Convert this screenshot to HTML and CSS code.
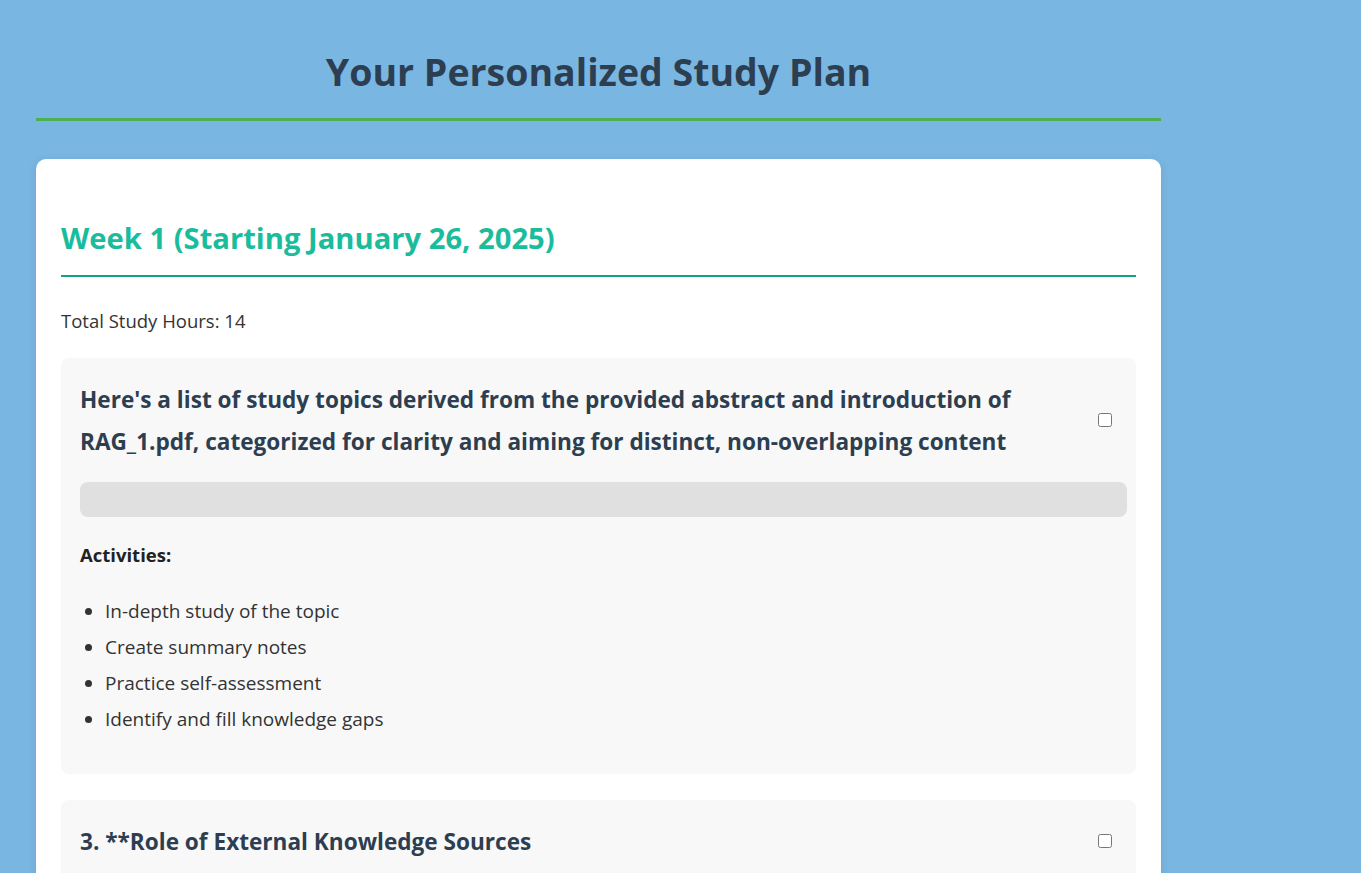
FILE: index.html
```html
<!DOCTYPE html>
<html lang="en">
<head>
<meta charset="utf-8">
<title>Your Personalized Study Plan</title>
<link rel="stylesheet" href="styles.css">
</head>
<body>
<div class="container">
  <h1 class="page-title">Your Personalized Study Plan</h1>
  <section class="week-card">
    <h2 class="week-title">Week 1 (Starting January 26, 2025)</h2>
    <p class="hours">Total Study Hours: 14</p>
    <div class="topic">
      <div class="topic-head">
        <h3 class="topic-title">Here's a list of study topics derived from the provided abstract and introduction of RAG_1.pdf, categorized for clarity and aiming for distinct, non-overlapping content</h3>
        <input type="checkbox" class="topic-check">
      </div>
      <div class="progress"></div>
      <p class="activities-label">Activities:</p>
      <ul class="activities">
        <li>In-depth study of the topic</li>
        <li>Create summary notes</li>
        <li>Practice self-assessment</li>
        <li>Identify and fill knowledge gaps</li>
      </ul>
    </div>
    <div class="topic">
      <div class="topic-head">
        <h3 class="topic-title">3. **Role of External Knowledge Sources</h3>
        <input type="checkbox" class="topic-check">
      </div>
      <div class="progress"></div>
      <p class="activities-label">Activities:</p>
      <ul class="activities">
        <li>In-depth study of the topic</li>
        <li>Create summary notes</li>
        <li>Practice self-assessment</li>
        <li>Identify and fill knowledge gaps</li>
      </ul>
    </div>
  </section>
</div>
</body>
</html>
```

FILE: styles.css
```css
html, body {
  margin: 0;
  padding: 0;
}
body {
  background: #7ab6e2;
  font-family: "Open Sans", "Noto Sans", sans-serif;
  color: #333;
}
.container {
  width: 1125px;
  margin-left: 36px;
  padding-top: 46px;
}
.page-title {
  margin: 0 0 38px;
  padding-bottom: 20px;
  border-bottom: 3px solid #4caf50;
  text-align: center;
  color: #2c3e50;
  font-size: 37.5px;
  line-height: 52px;
  font-weight: 700;
}
.week-card {
  background: #fff;
  border-radius: 10px;
  box-shadow: 0 2px 10px rgba(0, 0, 0, 0.1);
  padding: 25px;
}
.week-title {
  margin: 34px 0 0;
  padding-bottom: 17px;
  border-bottom: 2px solid #16a085;
  color: #1abc9c;
  font-size: 29.2px;
  line-height: 40px;
  font-weight: 700;
}
.hours {
  margin: 32px 0 25px;
  font-size: 18.5px;
  line-height: 24px;
}
.topic {
  background: #f8f8f8;
  border-radius: 8px;
  padding: 21px 9px 20px 19px;
  margin-bottom: 26px;
}
.topic-head {
  display: flex;
  align-items: center;
  gap: 20px;
  padding-right: 15px;
}
.topic-title {
  flex: 1;
  margin: 0;
  color: #2c3e50;
  font-size: 22.6px;
  line-height: 42px;
  font-weight: 700;
}
.topic-check {
  width: 14px;
  height: 14px;
  margin: 0 0 3px;
}
.progress {
  height: 35px;
  margin-top: 19px;
  background: #e0e0e0;
  border-radius: 8px;
}
.activities-label {
  margin: 25px 0 0;
  font-weight: 700;
  font-size: 18.5px;
  line-height: 26px;
  color: #222;
}
.activities {
  margin: 25px 0 0;
  padding-left: 25px;
  font-size: 19px;
  line-height: 36px;
  padding-bottom: 17px;
}
```
